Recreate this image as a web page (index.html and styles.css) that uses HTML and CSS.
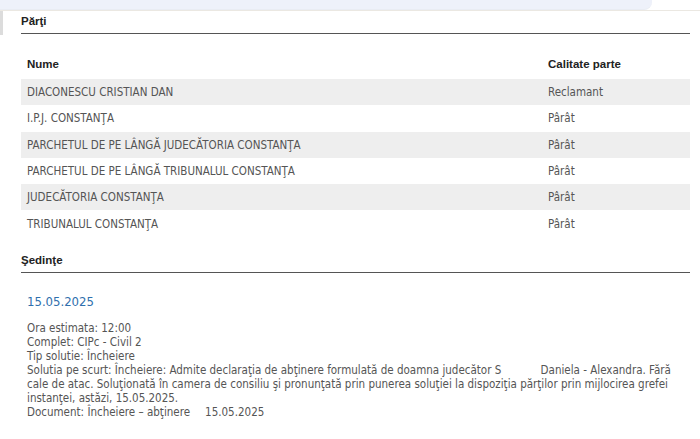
FILE: index.html
```html
<!DOCTYPE html>
<html lang="ro">
<head>
  <meta charset="UTF-8">
  <meta name="viewport" content="width=device-width, initial-scale=1.0">
  <title>Dosar - Părţi şi Şedinţe</title>
  <link rel="stylesheet" href="styles.css">
</head>
<body>
  <div class="topbar"></div>
  <div class="page">
    <div class="side-tab"></div>
    <div class="content">
      <h2 class="section-title">Părţi</h2>
      <table class="parti">
        <thead>
          <tr><th>Nume</th><th class="col-calitate">Calitate parte</th></tr>
        </thead>
        <tbody>
          <tr><td>DIACONESCU CRISTIAN DAN</td><td>Reclamant</td></tr>
          <tr><td>I.P.J. CONSTANŢA</td><td>Pârât</td></tr>
          <tr><td>PARCHETUL DE PE LÂNGĂ JUDECĂTORIA CONSTANŢA</td><td>Pârât</td></tr>
          <tr><td>PARCHETUL DE PE LÂNGĂ TRIBUNALUL CONSTANŢA</td><td>Pârât</td></tr>
          <tr><td>JUDECĂTORIA CONSTANŢA</td><td>Pârât</td></tr>
          <tr><td>TRIBUNALUL CONSTANŢA</td><td>Pârât</td></tr>
        </tbody>
      </table>

      <h2 class="section-title sedinte">Şedinţe</h2>
      <div class="sedinta">
        <div class="sedinta-data">15.05.2025</div>
        <div class="sedinta-detalii">
          Ora estimata: 12:00<br>
          Complet: CIPc - Civil 2<br>
          Tip solutie: Încheiere<br>
          Solutia pe scurt: Încheiere: Admite declaraţia de abţinere formulată de doamna judecător S<span class="redact"></span> Daniela - Alexandra. Fără cale de atac. Soluţionată în camera de consiliu şi pronunţată prin punerea soluţiei la dispoziţia părţilor prin mijlocirea grefei instanţei, astăzi, 15.05.2025.<br>
          Document: Încheiere – abţinere<span class="gap"></span>15.05.2025
        </div>
      </div>
    </div>
  </div>
</body>
</html>
```

FILE: styles.css
```css
body { margin: 0; background: #fff; font-family: "DejaVu Sans Condensed", "DejaVu Sans", sans-serif; color: #555; }
.topbar { width: 652px; height: 9px; background: #eef1fa; border-bottom-right-radius: 8px; border-bottom: 1px solid #e9ecf3; }
.page { display: flex; border-top: 1px solid #ebe8e2; }
.side-tab { width: 3px; height: 24px; background: #dcdcdc; flex-shrink: 0; }
.content { flex: 1; padding: 0 10px 0 18px; }
.section-title { margin: 0; padding-top: 2px; padding-bottom: 4px; font-family: "Liberation Sans", Arial, sans-serif; font-size: 11.5px; line-height: 16px; font-weight: bold; color: #222; border-bottom: 1px solid #555; }
.parti { width: 100%; border-collapse: collapse; margin-top: 15px; font-size: 11.5px; }
.parti th { height: 30px; padding: 0 6px; text-align: left; font-family: "Liberation Sans", Arial, sans-serif; font-size: 11.5px; font-weight: bold; color: #222; }
.parti th.col-calitate { width: 136px; }
.parti td { height: 26.3px; padding: 0 6px; color: #555; }
.parti tbody tr:nth-child(odd) td { background: #eeeeee; }
.sedinte { margin-top: 13px; }
.sedinta { padding: 21px 6px 0; }
.sedinta-data { font-size: 13px; line-height: 16px; color: #2f6fad; }
.sedinta-detalii { margin-top: 11px; font-size: 11.5px; line-height: 14px; color: #555; }
.redact { display: inline-block; width: 36px; }
.gap { display: inline-block; width: 15px; }
```
